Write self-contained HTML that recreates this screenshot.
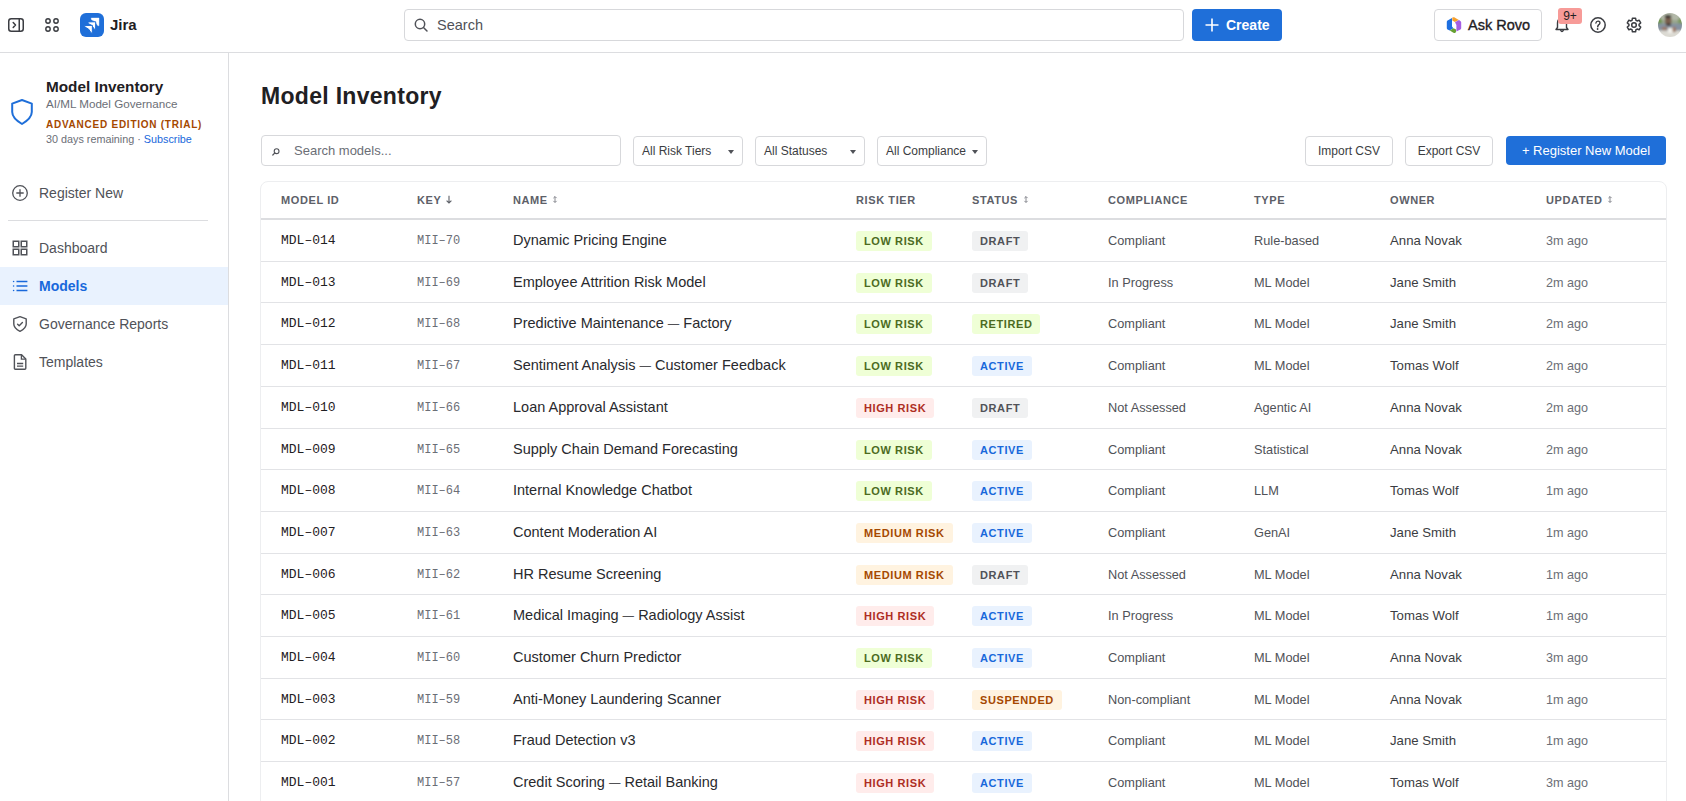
<!DOCTYPE html>
<html><head><meta charset="utf-8">
<style>
*{box-sizing:border-box;margin:0;padding:0}
html,body{width:1686px;height:801px;overflow:hidden;background:#fff;font-family:"Liberation Sans",sans-serif;color:#292a2e}
.abs{position:absolute}
svg{display:block;position:absolute;overflow:visible}
.top{position:absolute;left:0;top:0;width:1686px;height:53px;border-bottom:1px solid #dcdde0}
.jira{left:110px;top:15px;font-size:15px;font-weight:bold;line-height:20px;color:#1f2023}
.gsearch{left:404px;top:9px;width:780px;height:32px;border:1px solid #d7d8db;border-radius:4px}
.gsearch span{position:absolute;left:32px;top:6px;font-size:14.5px;line-height:18px;color:#505258}
.create{left:1192px;top:9px;width:90px;height:32px;background:#1f6fd9;border-radius:4px}
.create span{position:absolute;left:34px;top:7px;font-size:14px;font-weight:bold;line-height:18px;color:#fff}
.rovo{left:1434px;top:9px;width:108px;height:32px;border:1px solid #d7d8db;border-radius:4px}
.rovo span{position:absolute;left:33px;top:6px;font-size:14.5px;line-height:18px;color:#1f2023;-webkit-text-stroke:0.35px #1f2023}
.badge9{left:1558px;top:8px;width:24px;height:16px;background:#f79b98;border-radius:3px;font-size:12px;line-height:16px;text-align:center;color:#1f2023}
.avatar{left:1658px;top:13px;width:24px;height:24px;border-radius:50%;background:radial-gradient(circle at 50% 40%,#6b5544 0 18%,#7f8d78 30%,#98a58f 55%,#d8d6d0 75%);overflow:hidden}

.side{position:absolute;left:0;top:53px;width:229px;height:748px;border-right:1px solid #dcdde0}
.pname{left:46px;top:77.8px;font-size:15.3px;font-weight:bold;line-height:18px;color:#1f2023}
.psub{left:46px;top:97px;font-size:11.65px;line-height:14px;color:#6b6e76}
.ped{left:46px;top:118.5px;font-size:10px;font-weight:bold;line-height:12px;color:#a54800;letter-spacing:0.75px}
.prem{left:46px;top:133px;font-size:10.8px;line-height:13px;color:#6b6e76}
.prem b{font-weight:normal;color:#1868db}
.nav{position:absolute;left:0;width:228px;height:38px}
.nav span{position:absolute;left:39px;top:10px;font-size:14px;line-height:18px;color:#505258}
.nav.act{background:#e9f2fe}
.nav.act span{color:#1868db;font-weight:bold}
.divider{left:8px;top:220px;width:200px;height:1px;background:#dcdde0}

.h1{left:261px;top:82px;font-size:23px;letter-spacing:0.3px;font-weight:bold;line-height:28px;color:#1f2023}
.msearch{left:261px;top:135px;width:360px;height:31px;border:1px solid #d7d8db;border-radius:4px}
.msearch .ic{position:absolute;left:9px;top:6px;font-size:13px;line-height:16px;color:#505258}
.msearch span{position:absolute;left:32px;top:7px;font-size:13px;line-height:16px;color:#6b6e76}
.sel{top:136px;width:110px;height:30px;border:1px solid #d7d8db;border-radius:4px}
.sel span{position:absolute;left:8px;top:6px;font-size:12px;line-height:16px;color:#3b3d42}
.sel i{position:absolute;left:94px;top:13px;width:0;height:0;border-left:3px solid transparent;border-right:3px solid transparent;border-top:4px solid #505258}
.btn{top:136px;width:88px;height:30px;border:1px solid #d7d8db;border-radius:4px;font-size:12px;line-height:28px;text-align:center;color:#3b3d42}
.pbtn{left:1506px;top:136px;width:160px;height:29px;background:#1f6fd9;border-radius:4px;font-size:13px;line-height:29px;text-align:center;color:#fff}
.tbl{left:260px;top:181px;width:1407px;height:700px;border:1px solid #edeef0;border-radius:8px}
.thead{position:absolute;left:261px;top:182px;width:1405px;height:38px;border-bottom:2px solid #dcdde0}
.th{position:absolute;top:-0.3px;font-size:11px;font-weight:bold;line-height:36px;letter-spacing:0.6px;color:#5d6068;white-space:nowrap}
.row{position:absolute;left:261px;width:1405px;height:41.7px;border-bottom:1px solid #e2e3e6}
.c{position:absolute;top:0;line-height:40px;white-space:nowrap}
.mid{position:absolute;top:1.2px;font-family:"Liberation Mono",monospace;font-size:13px;color:#1f2023}
.key{top:1.2px;font-family:"Liberation Mono",monospace;font-size:12px;color:#6b6e76}
.nm{top:-0.2px;font-size:14.5px;color:#292a2e}
.cmp{top:1px;font-size:12.75px;color:#505258}
.own{top:1px;font-size:13.2px;color:#3b3d42}
.upd{top:1px;font-size:12.6px;color:#6b6e76}
.bd{position:absolute;top:11px;height:20px;padding:0 8px;border-radius:3px;font-size:11px;font-weight:bold;line-height:20px;letter-spacing:0.6px;white-space:nowrap}
.b-low{background:#efffd6;color:#4c6b1f}
.b-high{background:#ffeceb;color:#ae2e24}
.b-med{background:#fff3e0;color:#a54800}
.b-draft{background:#f0f1f2;color:#505258}
.b-active{background:#e9f2fe;color:#1868db}
.dash{font-size:11.5px;vertical-align:1px}
</style></head><body>

<div class="top">
  <!-- sidebar toggle -->
  <svg style="left:0;top:0" width="64" height="52" viewBox="0 0 64 52">
    <rect x="8.75" y="18.75" width="14.5" height="12.5" rx="2.5" fill="none" stroke="#3b3d42" stroke-width="1.5"/>
    <line x1="19.25" y1="18.75" x2="19.25" y2="31.25" stroke="#3b3d42" stroke-width="1.5"/>
    <path d="M13.2 22.5 L15.5 25 L13.2 27.5" fill="none" stroke="#3b3d42" stroke-width="1.5" stroke-linecap="round" stroke-linejoin="round"/>
    <circle cx="48" cy="21" r="2.2" fill="none" stroke="#3b3d42" stroke-width="1.4"/>
    <circle cx="56" cy="21" r="2.2" fill="none" stroke="#3b3d42" stroke-width="1.4"/>
    <circle cx="48" cy="29" r="2.2" fill="none" stroke="#3b3d42" stroke-width="1.4"/>
    <circle cx="56" cy="29" r="2.2" fill="none" stroke="#3b3d42" stroke-width="1.4"/>
  </svg>
  <!-- jira logo -->
  <svg style="left:80px;top:13px" width="24" height="24" viewBox="0 0 24 24">
    <rect x="0" y="0" width="24" height="24" rx="6" fill="#1f6fd9"/>
    <path d="M11.20 5.10 L19.00 5.00 L18.90 12.80 L17.70 12.50 L15.10 8.60 L11.50 6.70 Z" fill="#fff" stroke="#fff" stroke-width="0.4" stroke-linejoin="round"/>
    <path d="M7.90 8.90 L15.70 8.80 L15.60 16.60 L14.40 16.30 L11.80 12.40 L8.20 10.50 Z" fill="#fff" stroke="#1f6fd9" stroke-width="1" stroke-linejoin="round"/>
    <path d="M4.60 12.50 L12.40 12.40 L12.30 20.20 L11.10 19.90 L8.50 16.00 L4.90 14.10 Z" fill="#fff" stroke="#1f6fd9" stroke-width="1" stroke-linejoin="round"/>
  </svg>
  <div class="abs jira">Jira</div>

  <div class="abs gsearch">
    <svg style="left:9px;top:8px" width="14" height="14" viewBox="0 0 14 14">
      <circle cx="6" cy="6" r="4.7" fill="none" stroke="#505258" stroke-width="1.5"/>
      <path d="M9.5 9.5 L13 13" stroke="#505258" stroke-width="1.5" stroke-linecap="round"/>
    </svg>
    <span>Search</span>
  </div>
  <div class="abs create">
    <svg style="left:13px;top:9px" width="14" height="14" viewBox="0 0 14 14">
      <path d="M7 0.5 V13.5 M0.5 7 H13.5" stroke="#fff" stroke-width="1.6"/>
    </svg>
    <span>Create</span>
  </div>

  <div class="abs rovo">
    <svg style="left:7px;top:3px" width="24" height="24" viewBox="0 0 24 24">
      <path d="M10 5 L5.6 7.6 Q4.8 8.1 4.8 9 V15 Q4.8 16 5.6 16.5 L7.6 17.6 L11.4 15.2 L10 13.6 Z" fill="#1d6fe0"/>
      <path d="M10.3 4.6 Q11.2 3.9 12.2 4.3 L16.8 6.9 L12.9 9.1 L10.3 7.6 Z" fill="#f6a02c"/>
      <path d="M13 9.3 L17 7 Q19.2 8.2 19.2 9.2 V15 Q19.2 16 18.4 16.5 L14.4 18.6 V12 Z" fill="#a55ee3"/>
      <path d="M7.8 17.6 L11.6 15.3 L14 16.4 V18.6 Q14 19.9 12.8 20 Q12 20 11 19.4 Z" fill="#67a033"/>
    </svg>
    <span>Ask Rovo</span>
  </div>

  <!-- bell -->
  <svg style="left:1550px;top:10px" width="24" height="24" viewBox="0 0 24 24">
    <path d="M6 19.5 L7.5 17.5 V13 Q7.5 8.5 12 8 Q16.5 8.5 16.5 13 V17.5 L18 19.5 Z" fill="none" stroke="#3b3d42" stroke-width="1.4" stroke-linejoin="round"/>
    <path d="M10.5 20 Q12 23 13.5 20" fill="none" stroke="#3b3d42" stroke-width="1.4"/>
  </svg>
  <div class="abs badge9">9+</div>
  <!-- help -->
  <svg style="left:1586px;top:13px" width="24" height="24" viewBox="0 0 24 24">
    <circle cx="12" cy="12" r="7.2" fill="none" stroke="#3b3d42" stroke-width="1.5"/>
    <path d="M9.9 10 Q10.2 8 12.2 8.1 Q14.1 8.3 13.9 10.1 Q13.7 11.2 12.6 11.9 Q11.8 12.6 11.7 13.9" fill="none" stroke="#3b3d42" stroke-width="1.4" stroke-linecap="round"/>
    <circle cx="11.6" cy="16" r="0.9" fill="#3b3d42"/>
  </svg>
  <!-- gear -->
  <svg style="left:1622px;top:13px" width="24" height="24" viewBox="0 0 24 24">
    <path d="M10.01 7.31 L10.43 5.18 L13.57 5.18 L13.99 7.31 L15.07 7.93 L17.12 7.23 L18.69 9.95 L17.06 11.38 L17.06 12.62 L18.69 14.05 L17.12 16.77 L15.07 16.07 L13.99 16.69 L13.57 18.82 L10.43 18.82 L10.01 16.69 L8.93 16.07 L6.88 16.77 L5.31 14.05 L6.94 12.62 L6.94 11.38 L5.31 9.95 L6.88 7.23 L8.93 7.93 Z" fill="none" stroke="#3b3d42" stroke-width="1.5" stroke-linejoin="round"/>
    <circle cx="12" cy="12" r="2.3" fill="none" stroke="#3b3d42" stroke-width="1.5"/>
  </svg>
  <svg style="left:1658px;top:13px" width="24" height="24" viewBox="0 0 24 24">
    <defs><clipPath id="av"><circle cx="12" cy="12" r="12"/></clipPath><filter id="bl"><feGaussianBlur stdDeviation="0.9"/></filter></defs>
    <g clip-path="url(#av)"><g filter="url(#bl)">
      <rect x="-2" y="-2" width="28" height="28" fill="#dcdad3"/>
      <rect x="-2" y="-2" width="28" height="13" fill="#98a68c"/>
      <rect x="3" y="-2" width="18" height="9" fill="#b2b8a8"/>
      <rect x="-2" y="6" width="6" height="6" fill="#6f9450"/>
      <rect x="20" y="6" width="6" height="6" fill="#7d9a5e"/>
      <rect x="-2" y="10.5" width="28" height="7" fill="#8592a0"/>
      <ellipse cx="10.2" cy="7.5" rx="3.4" ry="4.6" fill="#7a5e4e"/>
      <ellipse cx="10" cy="3.6" rx="3.4" ry="1.8" fill="#3e3934"/>
      <ellipse cx="10.5" cy="11.5" rx="2.6" ry="1.6" fill="#4a403a"/>
      <ellipse cx="6.5" cy="15.5" rx="3" ry="1.8" fill="#9b7866"/>
      <ellipse cx="16" cy="16.5" rx="2.2" ry="2.8" fill="#9b7866"/>
      <rect x="10" y="15" width="4.5" height="5" fill="#f2f1ec"/>
    </g></g>
  </svg>
</div>

<div class="side"></div>
<!-- sidebar contents -->
<svg style="left:11px;top:99px" width="22" height="26" viewBox="0 0 22 26">
  <path d="M11 1 L1.2 4.6 V13 C1.2 18 6 22 11 25 C16 22 20.8 18 20.8 13 V4.6 Z" fill="none" stroke="#1f6fd9" stroke-width="2" stroke-linejoin="round"/>
</svg>
<div class="abs pname">Model Inventory</div>
<div class="abs psub">AI/ML Model Governance</div>
<div class="abs ped">ADVANCED EDITION (TRIAL)</div>
<div class="abs prem">30 days remaining · <b>Subscribe</b></div>

<div class="nav" style="top:174px">
  <svg style="left:12px;top:11px" width="16" height="16" viewBox="0 0 16 16">
    <circle cx="8" cy="8" r="7.3" fill="none" stroke="#505258" stroke-width="1.3"/>
    <path d="M8 4.3 V11.7 M4.3 8 H11.7" stroke="#505258" stroke-width="1.3"/>
  </svg>
  <span>Register New</span>
</div>
<div class="abs divider"></div>
<div class="nav" style="top:229px">
  <svg style="left:12px;top:11px" width="16" height="16" viewBox="0 0 16 16">
    <rect x="1.25" y="1.25" width="5.5" height="5.5" fill="none" stroke="#505258" stroke-width="1.5"/>
    <rect x="9.25" y="1.25" width="5.5" height="5.5" fill="none" stroke="#505258" stroke-width="1.5"/>
    <rect x="1.25" y="9.25" width="5.5" height="5.5" fill="none" stroke="#505258" stroke-width="1.5"/>
    <rect x="9.25" y="9.25" width="5.5" height="5.5" fill="none" stroke="#505258" stroke-width="1.5"/>
  </svg>
  <span>Dashboard</span>
</div>
<div class="nav act" style="top:267px">
  <svg style="left:12px;top:11px" width="16" height="16" viewBox="0 0 16 16">
    <circle cx="1.6" cy="3.5" r="0.8" fill="#1868db"/>
    <circle cx="1.6" cy="8" r="0.8" fill="#1868db"/>
    <circle cx="1.6" cy="12.5" r="0.8" fill="#1868db"/>
    <path d="M4.5 3.5 H15.4 M4.5 8 H15.4 M4.5 12.5 H15.4" stroke="#1868db" stroke-width="1.5"/>
  </svg>
  <span>Models</span>
</div>
<div class="nav" style="top:305px">
  <svg style="left:12px;top:11px" width="16" height="16" viewBox="0 0 16 16">
    <path d="M8 0.7 L1.8 2.9 V8 Q1.8 12.3 8 15.3 Q14.2 12.3 14.2 8 V2.9 Z" fill="none" stroke="#505258" stroke-width="1.4" stroke-linejoin="round"/>
    <path d="M5.6 8.2 L7.2 9.7 L10.4 6.6" fill="none" stroke="#505258" stroke-width="1.4" stroke-linecap="round" stroke-linejoin="round"/>
  </svg>
  <span>Governance Reports</span>
</div>
<div class="nav" style="top:343px">
  <svg style="left:12px;top:11px" width="16" height="16" viewBox="0 0 16 16">
    <path d="M2.4 1.8 Q2.4 0.8 3.4 0.8 H9.6 L13.8 5 V14.2 Q13.8 15.2 12.8 15.2 H3.4 Q2.4 15.2 2.4 14.2 Z" fill="none" stroke="#505258" stroke-width="1.4" stroke-linejoin="round"/>
    <path d="M9.4 1 V5.2 H13.6" fill="none" stroke="#505258" stroke-width="1.3"/>
    <path d="M5 9.5 H11.2 M5 12.2 H11.2" stroke="#505258" stroke-width="1.3"/>
  </svg>
  <span>Templates</span>
</div>

<!-- MAIN -->
<div class="abs h1">Model Inventory</div>
<div class="abs msearch"><svg style="left:9px;top:11px" width="10" height="10" viewBox="0 0 10 10"><circle cx="5.6" cy="4.2" r="2.4" fill="none" stroke="#505258" stroke-width="1.1"/><path d="M3.9 5.9 L1.8 8" stroke="#505258" stroke-width="1.2" stroke-linecap="round"/></svg><span>Search models...</span></div>
<div class="abs sel" style="left:633px"><span>All Risk Tiers</span><i></i></div>
<div class="abs sel" style="left:755px"><span>All Statuses</span><i></i></div>
<div class="abs sel" style="left:877px"><span>All Compliance</span><i></i></div>
<div class="abs btn" style="left:1305px">Import CSV</div>
<div class="abs btn" style="left:1405px">Export CSV</div>
<div class="abs pbtn">+ Register New Model</div>
<div class="abs tbl"></div>
<div class="thead">
<span class="th" style="left:20px">MODEL ID</span>
<span class="th" style="left:156px">KEY <svg style="position:relative;display:inline-block;vertical-align:middle;left:0;top:-1px" width="8" height="9" viewBox="0 0 8 9"><path d="M4 0.8 V8 M1.6 5.6 L4 8 L6.4 5.6" fill="none" stroke="#5d6068" stroke-width="1.1"/></svg></span>
<span class="th" style="left:252px">NAME <svg style="position:relative;display:inline-block;vertical-align:middle;left:1px;top:-1.5px" width="6" height="7" viewBox="0 0 6 7"><path d="M3 0.7 V6.3 M1.4 2.1 L3 0.5 L4.6 2.1 M1.4 4.9 L3 6.5 L4.6 4.9" fill="none" stroke="#7a7d85" stroke-width="0.9"/></svg></span>
<span class="th" style="left:595px">RISK TIER</span>
<span class="th" style="left:711px">STATUS <svg style="position:relative;display:inline-block;vertical-align:middle;left:1px;top:-1.5px" width="6" height="7" viewBox="0 0 6 7"><path d="M3 0.7 V6.3 M1.4 2.1 L3 0.5 L4.6 2.1 M1.4 4.9 L3 6.5 L4.6 4.9" fill="none" stroke="#7a7d85" stroke-width="0.9"/></svg></span>
<span class="th" style="left:847px">COMPLIANCE</span>
<span class="th" style="left:993px">TYPE</span>
<span class="th" style="left:1129px">OWNER</span>
<span class="th" style="left:1285px">UPDATED <svg style="position:relative;display:inline-block;vertical-align:middle;left:1px;top:-1.5px" width="6" height="7" viewBox="0 0 6 7"><path d="M3 0.7 V6.3 M1.4 2.1 L3 0.5 L4.6 2.1 M1.4 4.9 L3 6.5 L4.6 4.9" fill="none" stroke="#7a7d85" stroke-width="0.9"/></svg></span>
</div>
<div class="row" style="top:220px;height:42px">
<span class="c mid" style="left:20px">MDL&#8211;014</span>
<span class="c key" style="left:156px">MII&#8211;70</span>
<span class="c nm" style="left:252px">Dynamic Pricing Engine</span>
<span class="bd b-low" style="left:595px">LOW RISK</span>
<span class="bd b-draft" style="left:711px">DRAFT</span>
<span class="c cmp" style="left:847px">Compliant</span>
<span class="c cmp" style="left:993px">Rule-based</span>
<span class="c own" style="left:1129px">Anna Novak</span>
<span class="c upd" style="left:1285px">3m ago</span>
</div>
<div class="row" style="top:262px;height:41px">
<span class="c mid" style="left:20px">MDL&#8211;013</span>
<span class="c key" style="left:156px">MII&#8211;69</span>
<span class="c nm" style="left:252px">Employee Attrition Risk Model</span>
<span class="bd b-low" style="left:595px">LOW RISK</span>
<span class="bd b-draft" style="left:711px">DRAFT</span>
<span class="c cmp" style="left:847px">In Progress</span>
<span class="c cmp" style="left:993px">ML Model</span>
<span class="c own" style="left:1129px">Jane Smith</span>
<span class="c upd" style="left:1285px">2m ago</span>
</div>
<div class="row" style="top:303px;height:42px">
<span class="c mid" style="left:20px">MDL&#8211;012</span>
<span class="c key" style="left:156px">MII&#8211;68</span>
<span class="c nm" style="left:252px">Predictive Maintenance <span class="dash">—</span> Factory</span>
<span class="bd b-low" style="left:595px">LOW RISK</span>
<span class="bd b-low" style="left:711px">RETIRED</span>
<span class="c cmp" style="left:847px">Compliant</span>
<span class="c cmp" style="left:993px">ML Model</span>
<span class="c own" style="left:1129px">Jane Smith</span>
<span class="c upd" style="left:1285px">2m ago</span>
</div>
<div class="row" style="top:345px;height:42px">
<span class="c mid" style="left:20px">MDL&#8211;011</span>
<span class="c key" style="left:156px">MII&#8211;67</span>
<span class="c nm" style="left:252px">Sentiment Analysis <span class="dash">—</span> Customer Feedback</span>
<span class="bd b-low" style="left:595px">LOW RISK</span>
<span class="bd b-active" style="left:711px">ACTIVE</span>
<span class="c cmp" style="left:847px">Compliant</span>
<span class="c cmp" style="left:993px">ML Model</span>
<span class="c own" style="left:1129px">Tomas Wolf</span>
<span class="c upd" style="left:1285px">2m ago</span>
</div>
<div class="row" style="top:387px;height:42px">
<span class="c mid" style="left:20px">MDL&#8211;010</span>
<span class="c key" style="left:156px">MII&#8211;66</span>
<span class="c nm" style="left:252px">Loan Approval Assistant</span>
<span class="bd b-high" style="left:595px">HIGH RISK</span>
<span class="bd b-draft" style="left:711px">DRAFT</span>
<span class="c cmp" style="left:847px">Not Assessed</span>
<span class="c cmp" style="left:993px">Agentic AI</span>
<span class="c own" style="left:1129px">Anna Novak</span>
<span class="c upd" style="left:1285px">2m ago</span>
</div>
<div class="row" style="top:429px;height:41px">
<span class="c mid" style="left:20px">MDL&#8211;009</span>
<span class="c key" style="left:156px">MII&#8211;65</span>
<span class="c nm" style="left:252px">Supply Chain Demand Forecasting</span>
<span class="bd b-low" style="left:595px">LOW RISK</span>
<span class="bd b-active" style="left:711px">ACTIVE</span>
<span class="c cmp" style="left:847px">Compliant</span>
<span class="c cmp" style="left:993px">Statistical</span>
<span class="c own" style="left:1129px">Anna Novak</span>
<span class="c upd" style="left:1285px">2m ago</span>
</div>
<div class="row" style="top:470px;height:42px">
<span class="c mid" style="left:20px">MDL&#8211;008</span>
<span class="c key" style="left:156px">MII&#8211;64</span>
<span class="c nm" style="left:252px">Internal Knowledge Chatbot</span>
<span class="bd b-low" style="left:595px">LOW RISK</span>
<span class="bd b-active" style="left:711px">ACTIVE</span>
<span class="c cmp" style="left:847px">Compliant</span>
<span class="c cmp" style="left:993px">LLM</span>
<span class="c own" style="left:1129px">Tomas Wolf</span>
<span class="c upd" style="left:1285px">1m ago</span>
</div>
<div class="row" style="top:512px;height:42px">
<span class="c mid" style="left:20px">MDL&#8211;007</span>
<span class="c key" style="left:156px">MII&#8211;63</span>
<span class="c nm" style="left:252px">Content Moderation AI</span>
<span class="bd b-med" style="left:595px">MEDIUM RISK</span>
<span class="bd b-active" style="left:711px">ACTIVE</span>
<span class="c cmp" style="left:847px">Compliant</span>
<span class="c cmp" style="left:993px">GenAI</span>
<span class="c own" style="left:1129px">Jane Smith</span>
<span class="c upd" style="left:1285px">1m ago</span>
</div>
<div class="row" style="top:554px;height:41px">
<span class="c mid" style="left:20px">MDL&#8211;006</span>
<span class="c key" style="left:156px">MII&#8211;62</span>
<span class="c nm" style="left:252px">HR Resume Screening</span>
<span class="bd b-med" style="left:595px">MEDIUM RISK</span>
<span class="bd b-draft" style="left:711px">DRAFT</span>
<span class="c cmp" style="left:847px">Not Assessed</span>
<span class="c cmp" style="left:993px">ML Model</span>
<span class="c own" style="left:1129px">Anna Novak</span>
<span class="c upd" style="left:1285px">1m ago</span>
</div>
<div class="row" style="top:595px;height:42px">
<span class="c mid" style="left:20px">MDL&#8211;005</span>
<span class="c key" style="left:156px">MII&#8211;61</span>
<span class="c nm" style="left:252px">Medical Imaging <span class="dash">—</span> Radiology Assist</span>
<span class="bd b-high" style="left:595px">HIGH RISK</span>
<span class="bd b-active" style="left:711px">ACTIVE</span>
<span class="c cmp" style="left:847px">In Progress</span>
<span class="c cmp" style="left:993px">ML Model</span>
<span class="c own" style="left:1129px">Tomas Wolf</span>
<span class="c upd" style="left:1285px">1m ago</span>
</div>
<div class="row" style="top:637px;height:42px">
<span class="c mid" style="left:20px">MDL&#8211;004</span>
<span class="c key" style="left:156px">MII&#8211;60</span>
<span class="c nm" style="left:252px">Customer Churn Predictor</span>
<span class="bd b-low" style="left:595px">LOW RISK</span>
<span class="bd b-active" style="left:711px">ACTIVE</span>
<span class="c cmp" style="left:847px">Compliant</span>
<span class="c cmp" style="left:993px">ML Model</span>
<span class="c own" style="left:1129px">Anna Novak</span>
<span class="c upd" style="left:1285px">3m ago</span>
</div>
<div class="row" style="top:679px;height:41px">
<span class="c mid" style="left:20px">MDL&#8211;003</span>
<span class="c key" style="left:156px">MII&#8211;59</span>
<span class="c nm" style="left:252px">Anti-Money Laundering Scanner</span>
<span class="bd b-high" style="left:595px">HIGH RISK</span>
<span class="bd b-med" style="left:711px">SUSPENDED</span>
<span class="c cmp" style="left:847px">Non-compliant</span>
<span class="c cmp" style="left:993px">ML Model</span>
<span class="c own" style="left:1129px">Anna Novak</span>
<span class="c upd" style="left:1285px">1m ago</span>
</div>
<div class="row" style="top:720px;height:42px">
<span class="c mid" style="left:20px">MDL&#8211;002</span>
<span class="c key" style="left:156px">MII&#8211;58</span>
<span class="c nm" style="left:252px">Fraud Detection v3</span>
<span class="bd b-high" style="left:595px">HIGH RISK</span>
<span class="bd b-active" style="left:711px">ACTIVE</span>
<span class="c cmp" style="left:847px">Compliant</span>
<span class="c cmp" style="left:993px">ML Model</span>
<span class="c own" style="left:1129px">Jane Smith</span>
<span class="c upd" style="left:1285px">1m ago</span>
</div>
<div class="row" style="top:762px;height:42px">
<span class="c mid" style="left:20px">MDL&#8211;001</span>
<span class="c key" style="left:156px">MII&#8211;57</span>
<span class="c nm" style="left:252px">Credit Scoring <span class="dash">—</span> Retail Banking</span>
<span class="bd b-high" style="left:595px">HIGH RISK</span>
<span class="bd b-active" style="left:711px">ACTIVE</span>
<span class="c cmp" style="left:847px">Compliant</span>
<span class="c cmp" style="left:993px">ML Model</span>
<span class="c own" style="left:1129px">Tomas Wolf</span>
<span class="c upd" style="left:1285px">3m ago</span>
</div>

</body></html>
